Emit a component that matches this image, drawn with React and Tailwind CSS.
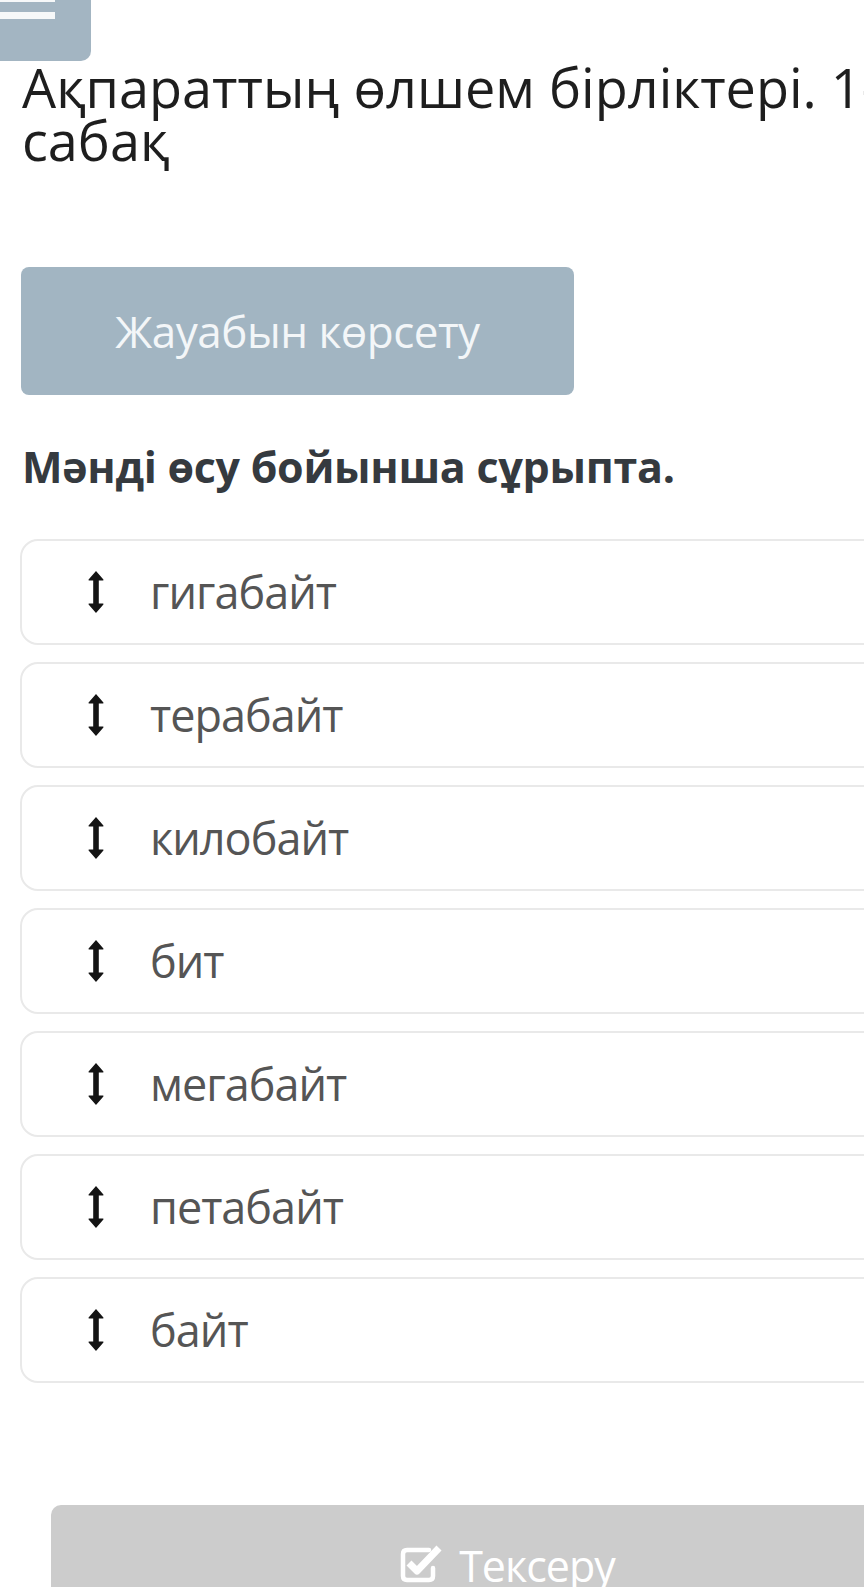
const items = ["гигабайт", "терабайт", "килобайт", "бит", "мегабайт", "петабайт", "байт"];

function ArrowsV() {
  return (
    <svg width="16" height="42" viewBox="0 0 16 42" className="shrink-0">
      <path
        d="M8 0 L15.4 8.6 Q16 9.6 14.8 9.6 L10.8 9.6 L10.8 32.4 L14.8 32.4 Q16 32.4 15.4 33.4 L8 42 L0.6 33.4 Q0 32.4 1.2 32.4 L5.2 32.4 L5.2 9.6 L1.2 9.6 Q0 9.6 0.6 8.6 Z"
        fill="#141414"
      />
    </svg>
  );
}

function CheckSquare() {
  return (
    <svg width="44" height="40" viewBox="0 0 44 40" className="shrink-0">
      <path
        d="M30 7 H8 Q4 7 4 11 V33 Q4 37 8 37 H30 Q34 37 34 33 V25"
        fill="none"
        stroke="#ffffff"
        strokeWidth="4.5"
        strokeLinecap="round"
      />
      <path
        d="M10 20 L18 28 L40 5"
        fill="none"
        stroke="#ffffff"
        strokeWidth="7"
        strokeLinejoin="round"
      />
    </svg>
  );
}

export default function App() {
  return (
    <div
      className="w-[864px] h-[1587px] overflow-hidden bg-white"
      style={{ fontFamily: '"Open Sans", "Noto Sans", sans-serif' }}
    >
      <div className="w-[1000px]">
        {/* menu button, page is scrolled so only the bottom shows */}
        <div className="w-[91px] h-[61px] rounded-br-[10px] bg-[#a3b5c2] overflow-hidden">
          <div className="-mt-[5px] flex flex-col gap-[10px]">
            <div className="h-[7px] w-[55px] bg-white/90" />
            <div className="h-[7px] w-[55px] bg-white/90" />
          </div>
        </div>

        <h1 className="pl-[22px] text-[54px] leading-[53px] text-[#1e1e1e] whitespace-nowrap">
          Ақпараттың өлшем бірліктері. 1-
          <br />
          сабақ
        </h1>

        <button className="mt-[100px] ml-[21px] w-[553px] h-[128px] rounded-[8px] bg-[#a2b5c2] text-[44px] tracking-[-0.5px] text-[#f3f6f8]">
          Жауабын көрсету
        </button>

        <h2 className="mt-[45px] pl-[22px] text-[43px] leading-[53px] tracking-[-0.3px] font-bold text-[#353a3f]">
          Мәнді өсу бойынша сұрыпта.
        </h2>

        <div className="mt-[46px] ml-[20px] flex flex-col gap-[17px]">
          {items.map((item) => (
            <div
              key={item}
              className="h-[106px] w-[960px] flex items-center pl-[66px] gap-[46px] border-2 border-[#e9e9e9] rounded-[18px] bg-white"
            >
              <ArrowsV />
              <span className="text-[45px] tracking-[-1px] text-[#555555]">{item}</span>
            </div>
          ))}
        </div>

        <div className="mt-[122px] ml-[51px] w-[912px] h-[120px] rounded-[10px] bg-[#cccccc] flex justify-center pt-[38px]">
          <div className="flex items-start gap-[16px]">
            <CheckSquare />
            <span className="text-[43px] leading-[46px] tracking-[-1px] text-white">Тексеру</span>
          </div>
        </div>
      </div>
    </div>
  );
}
